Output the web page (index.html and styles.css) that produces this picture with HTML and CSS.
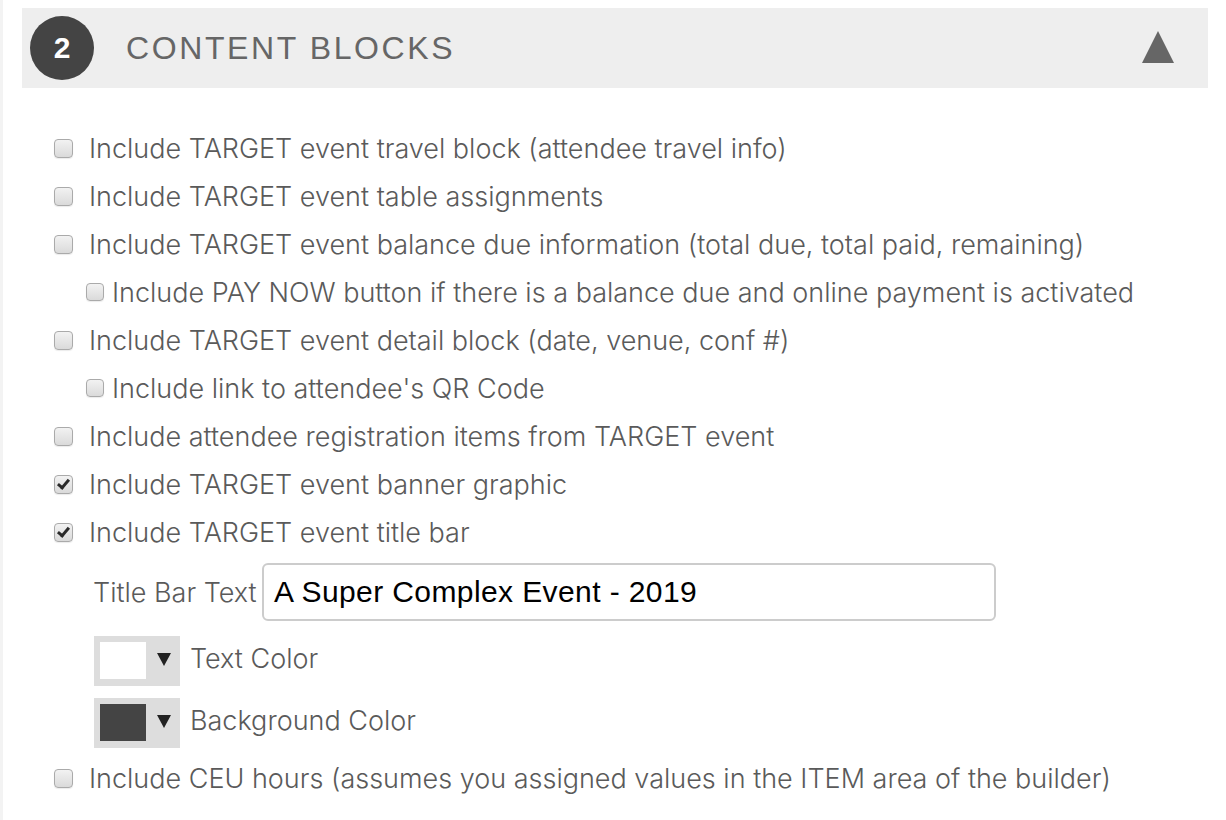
FILE: index.html
```html
<!DOCTYPE html>
<html>
<head>
<meta charset="utf-8">
<link rel="stylesheet" href="styles.css">
</head>
<body>
<div class="page">
  <div class="section-header">
    <div class="step">2</div>
    <div class="section-title">CONTENT BLOCKS</div>
    <div class="toggle"></div>
  </div>
  <div class="options">
    <label class="opt"><span class="cb"></span><span class="txt">Include TARGET event travel block (attendee travel info)</span></label>
    <label class="opt"><span class="cb"></span><span class="txt">Include TARGET event table assignments</span></label>
    <label class="opt"><span class="cb"></span><span class="txt">Include TARGET event balance due information (total due, total paid, remaining)</span></label>
    <label class="opt sub"><span class="cb small"></span><span class="txt">Include PAY NOW button if there is a balance due and online payment is activated</span></label>
    <label class="opt"><span class="cb"></span><span class="txt">Include TARGET event detail block (date, venue, conf #)</span></label>
    <label class="opt sub"><span class="cb small"></span><span class="txt">Include link to attendee's QR Code</span></label>
    <label class="opt"><span class="cb"></span><span class="txt">Include attendee registration items from TARGET event</span></label>
    <label class="opt"><span class="cb checked"></span><span class="txt">Include TARGET event banner graphic</span></label>
    <label class="opt"><span class="cb checked"></span><span class="txt">Include TARGET event title bar</span></label>
    <div class="titlebar-row">
      <span class="field-label">Title Bar Text</span>
      <div class="text-input">A Super Complex Event - 2019</div>
    </div>
    <div class="color-row first">
      <div class="swatch"><span class="chip white"></span><span class="arrow"></span></div>
      <span class="txt">Text Color</span>
    </div>
    <div class="color-row">
      <div class="swatch"><span class="chip dark"></span><span class="arrow"></span></div>
      <span class="txt">Background Color</span>
    </div>
    <label class="opt last"><span class="cb"></span><span class="txt">Include CEU hours (assumes you assigned values in the ITEM area of the builder)</span></label>
  </div>
</div>
</body>
</html>
```

FILE: styles.css
```css
html, body {
  margin: 0;
  padding: 0;
  background: #ffffff;
}
body {
  border-left: 3px solid #f3f3f3;
  min-height: 820px;
  box-sizing: border-box;
  font-family: "Liberation Sans", Arial, sans-serif;
}
.page {
  padding: 8px 18px 0 19px;
}
.section-header {
  height: 80px;
  background: #eeeeee;
  display: flex;
  align-items: center;
  padding: 0 34px 0 8px;
}
.step {
  width: 64px;
  height: 64px;
  border-radius: 50%;
  background: #444444;
  color: #ffffff;
  font-weight: bold;
  font-size: 30px;
  display: flex;
  align-items: center;
  justify-content: center;
}
.section-title {
  margin-left: 32px;
  font-size: 32px;
  letter-spacing: 2.6px;
  color: #666666;
  flex: 1;
}
.toggle {
  width: 0;
  height: 0;
  border-left: 16px solid transparent;
  border-right: 16px solid transparent;
  border-bottom: 32px solid #666666;
  margin-top: -2px;
}
.options {
  padding: 36px 0 0 32px;
  display: flex;
  flex-direction: column;
}
.opt {
  height: 48px;
  display: flex;
  align-items: center;
}
.txt, .field-label {
  font-family: Inter, "Liberation Sans", sans-serif;
  font-weight: 300;
  font-size: 27px;
  color: #5a5a5a;
}
.cb {
  width: 17px;
  height: 17px;
  border: 1px solid #aaaaaa;
  border-radius: 4px;
  background: linear-gradient(#f2f2f2, #dadada);
  box-shadow: 0 1px 1px rgba(0,0,0,0.08);
  margin-right: 16px;
  flex: none;
  position: relative;
}
.cb.checked::after {
  content: "";
  position: absolute;
  left: 5px;
  top: 1px;
  width: 4px;
  height: 9px;
  border-right: 3px solid #2a2a2a;
  border-bottom: 3px solid #2a2a2a;
  transform: rotate(40deg);
}
.opt.sub {
  padding-left: 32px;
}
.cb.small {
  width: 16px;
  height: 16px;
  margin-right: 8px;
}
.titlebar-row {
  margin-top: 7px;
  padding-left: 39px;
  display: flex;
  align-items: center;
  height: 58px;
}
.field-label {
  width: 169px;
  flex: none;
}
.text-input {
  width: 734px;
  height: 58px;
  box-sizing: border-box;
  border: 2px solid #cccccc;
  border-radius: 6px;
  padding-left: 10px;
  display: flex;
  align-items: center;
  font-family: "Liberation Sans", Arial, sans-serif;
  font-size: 30px;
  letter-spacing: 0.4px;
  color: #000000;
}
.color-row {
  display: flex;
  align-items: center;
  padding-left: 40px;
  margin-top: 12px;
}
.color-row.first {
  margin-top: 15px;
}
.color-row .txt {
  margin-bottom: 6px;
}
.swatch {
  width: 86px;
  height: 50px;
  background: #dddddd;
  box-sizing: border-box;
  padding: 6px 0 7px 6px;
  display: flex;
  align-items: stretch;
  margin-right: 10px;
  flex: none;
}
.chip {
  width: 46px;
}
.chip.white { background: #ffffff; }
.chip.dark { background: #444444; }
.arrow {
  align-self: center;
  width: 0;
  height: 0;
  margin-left: 11px;
  margin-top: -3px;
  border-left: 7px solid transparent;
  border-right: 7px solid transparent;
  border-top: 13px solid #222222;
}
.opt.last {
  margin-top: 6px;
}
```
